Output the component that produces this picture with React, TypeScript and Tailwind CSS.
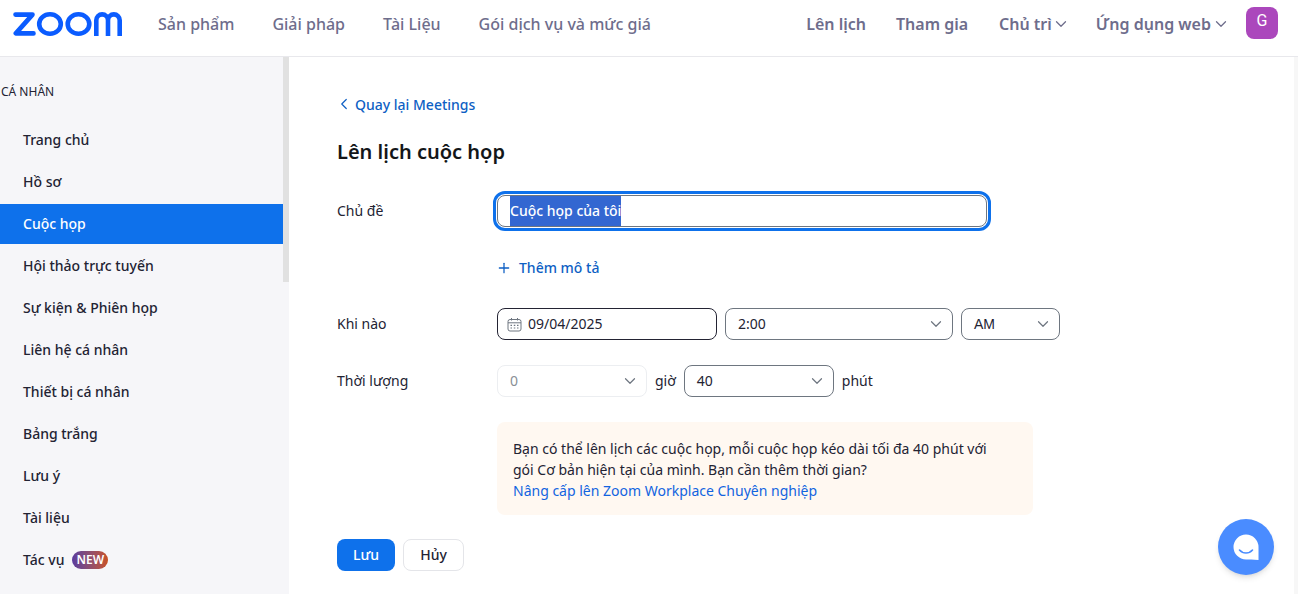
import { FC, ReactNode } from "react";
import { ChevronDown, ChevronLeft, Plus } from "lucide-react";

const sidebarItems = [
  "Trang chủ",
  "Hồ sơ",
  "Cuộc họp",
  "Hội thảo trực tuyến",
  "Sự kiện & Phiên họp",
  "Liên hệ cá nhân",
  "Thiết bị cá nhân",
  "Bảng trắng",
  "Lưu ý",
  "Tài liệu",
];

const ZoomLogo: FC = () => (
  <svg width="110" height="24" viewBox="0 0 110 24" fill="none" stroke="#0b5cff" strokeWidth="4.6">
    <path d="M2.5 2.6H19.5L2.8 21.4H20.5" strokeLinecap="round" strokeLinejoin="round" />
    <ellipse cx="37" cy="12" rx="10.8" ry="9.7" />
    <ellipse cx="65.5" cy="12" rx="10.8" ry="9.7" />
    <path d="M83.3 24V8.2a5.85 5.85 0 0 1 11.7 0V24M95 8.2a5.85 5.85 0 0 1 11.7 0V24" />
  </svg>
);

const CalendarIcon: FC = () => (
  <svg width="15" height="15" viewBox="0 0 15 15" fill="none" stroke="#6e7680" strokeWidth="1">
    <rect x="1" y="2.5" width="13" height="11.5" rx="2" />
    <path d="M1 5.8H14M4.5 1V3.5M10.5 1V3.5" />
    <path d="M3.5 8.3H5M6.8 8.3H8.3M10 8.3H11.5M3.5 11H5M6.8 11H8.3M10 11H11.5" strokeWidth="1.2" />
  </svg>
);

const NavLink: FC<{ children: ReactNode; caret?: boolean; className?: string }> = ({ children, caret, className = "" }) => (
  <span className={`flex items-center gap-[5px] whitespace-nowrap text-[16px] text-[#6e6d8c] ${className}`}>
    {children}
    {caret && <ChevronDown size={18} strokeWidth={1.7} className="-mx-[4.5px]" />}
  </span>
);

const SelectBox: FC<{ value: string; className: string; disabled?: boolean }> = ({ value, className, disabled }) => (
  <div
    className={`flex h-8 items-center justify-between rounded-lg border pl-3 pr-[7px] text-sm ${
      disabled ? "border-[#eceef1] text-[#8a8f96]" : "border-[#6e7680] text-[#232333]"
    } ${className}`}
  >
    <span>{value}</span>
    <ChevronDown size={18} strokeWidth={1.6} className="text-[#6e7680]" />
  </div>
);

const FormLabel: FC<{ children: ReactNode }> = ({ children }) => (
  <div className="w-40 shrink-0 text-sm text-[#232333]">{children}</div>
);

export default function App() {
  return (
    <div className="flex h-[594px] w-[1298px] flex-col overflow-hidden bg-white font-['Noto_Sans','Open_Sans',sans-serif]">
      <header className="flex h-[57px] shrink-0 items-center border-b border-[#e8e8ec] pb-[9px] pl-[13px] pr-[20px]">
        <ZoomLogo />
        <nav className="ml-[35px] flex items-center gap-[38px]">
          <NavLink className="font-medium">Sản phẩm</NavLink>
          <NavLink className="font-medium">Giải pháp</NavLink>
          <NavLink className="font-medium">Tài Liệu</NavLink>
          <NavLink className="font-medium">Gói dịch vụ và mức giá</NavLink>
        </nav>
        <div className="ml-auto flex items-center gap-[30px]">
          <NavLink className="font-semibold">Lên lịch</NavLink>
          <NavLink className="mr-px font-semibold">Tham gia</NavLink>
          <NavLink className="font-semibold" caret>Chủ trì</NavLink>
          <NavLink className="font-semibold" caret>Ứng dụng web</NavLink>
          <div className="-ml-[9px] mb-[1px] flex h-8 w-8 items-center justify-center rounded-lg bg-[#ab47bc] pb-1 font-['Roboto',sans-serif] text-base font-normal text-white">
            G
          </div>
        </div>
      </header>

      <div className="flex min-h-0 flex-1">
        <aside className="flex w-[289px] shrink-0 bg-[#f6f6f9]">
          <div className="w-[283px] shrink-0">
            <div className="pl-px pt-[27px] text-xs leading-4 text-[#232333]">CÁ NHÂN</div>
            <ul className="mt-[20px] flex flex-col gap-[2px]">
              {sidebarItems.map((item) => (
                <li
                  key={item}
                  className={`flex h-10 items-center pl-[23px] text-sm font-medium ${
                    item === "Cuộc họp" ? "bg-[#0e71eb] text-white" : "text-[#232333]"
                  }`}
                >
                  {item}
                </li>
              ))}
              <li className="flex h-10 items-center gap-2 pl-[23px] text-sm font-medium text-[#232333]">
                Tác vụ
                <span className="rounded-full bg-gradient-to-r from-[#5b3a9e] to-[#c8501c] px-1 text-[12px] font-semibold leading-[18px] text-white">
                  NEW
                </span>
              </li>
            </ul>
          </div>
          <div className="h-[225px] w-[6px] bg-[#e1e1e1]" />
        </aside>

        <main className="relative min-w-0 flex-1 pl-[48px] pt-[38px]">
          <div className="flex h-5 items-center text-sm font-medium text-[#0e5fc4]">
            <ChevronLeft size={18} strokeWidth={1.6} className="-ml-[2px] mr-[2px] mb-[3px]" />
            Quay lại Meetings
          </div>
          <h1 className="mt-[23px] text-[20px] font-semibold leading-7 text-[#131619]">Lên lịch cuộc họp</h1>

          <div className="mt-[29px] flex">
            <div className="w-40 shrink-0 pt-[6px] text-sm leading-5 text-[#232333]">Chủ đề</div>
            <div className="flex h-8 w-[490px] items-center rounded-lg border border-[#6e7680] pl-3 text-sm font-medium outline-[3px] outline-offset-1 outline-[#0e71eb]">
              <span className="bg-[#3367d1] leading-[30px] text-white">Cuộc họp của tôi</span>
            </div>
          </div>

          <div className="ml-40 mt-[31px] flex h-5 items-center gap-[7px] text-sm font-medium text-[#0e5fc4]">
            <Plus size={16} strokeWidth={1.9} className="-ml-px" />
            Thêm mô tả
          </div>

          <div className="mt-[30px] flex items-center">
            <FormLabel>Khi nào</FormLabel>
            <div className="flex h-8 w-[220px] items-center gap-[6px] rounded-lg border border-[#232333] pl-[9px] text-sm text-[#232333]">
              <CalendarIcon />
              09/04/2025
            </div>
            <SelectBox value="2:00" className="ml-2 w-[228px]" />
            <SelectBox value="AM" className="ml-2 w-[99px] font-['Liberation_Sans',sans-serif]" />
          </div>

          <div className="mt-[25px] flex items-center">
            <FormLabel>Thời lượng</FormLabel>
            <SelectBox value="0" className="w-[150px]" disabled />
            <span className="ml-2 text-sm text-[#232333]">giờ</span>
            <SelectBox value="40" className="ml-2 w-[150px]" />
            <span className="ml-2 text-sm text-[#232333]">phút</span>
          </div>

          <div className="ml-40 mt-[25px] h-[93px] w-[536px] rounded-lg bg-[#fff8f1] px-4 pt-[16px] text-sm leading-[21px] text-[#232333]">
            <p>Bạn có thể lên lịch các cuộc họp, mỗi cuộc họp kéo dài tối đa 40 phút với</p>
            <p>gói Cơ bản hiện tại của mình. Bạn cần thêm thời gian?</p>
            <p className="text-[#1264e0]">Nâng cấp lên Zoom Workplace Chuyên nghiệp</p>
          </div>

          <div className="mt-6 flex gap-2">
            <button className="h-8 w-[58px] rounded-lg bg-[#0e71eb] text-sm font-medium text-white">Lưu</button>
            <button className="h-8 w-[61px] rounded-lg border border-[#e4e5e9] bg-white text-sm font-medium text-[#232333]">
              Hủy
            </button>
          </div>

          <div className="absolute right-[24px] top-[462px] flex h-14 w-14 items-center justify-center rounded-full bg-[#4a8cff] shadow-md">
            <svg width="26" height="26" viewBox="0 0 26 26">
              <path d="M13 .5A12.5 12.5 0 1 0 13 25.5C16 25.5 20 25 25.5 26V13A12.5 12.5 0 0 0 13 .5Z" fill="#fff" />
              <path d="M6.5 16C10 20 16 20 19.5 16" fill="none" stroke="#4a8cff" strokeWidth="1.6" strokeLinecap="round" />
            </svg>
          </div>
          <div className="absolute right-0 top-0 h-full w-[4px] bg-[#f7f7f7]" />
        </main>
      </div>
    </div>
  );
}
